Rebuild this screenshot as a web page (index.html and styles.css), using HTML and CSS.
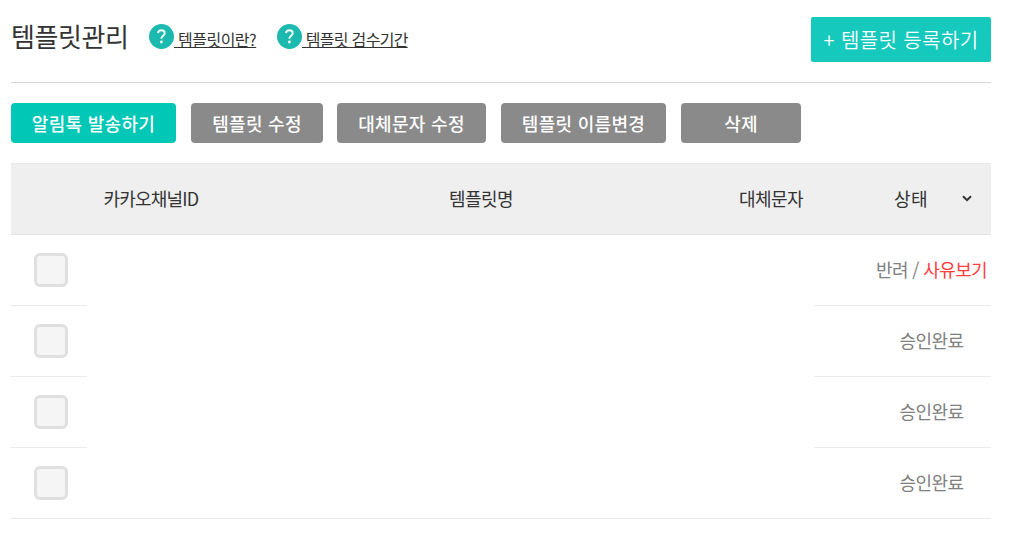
FILE: index.html
```
<!DOCTYPE html>
<html lang="ko">
<head>
    <meta charset="UTF-8">
    <meta name="viewport" content="width=device-width, initial-scale=1.0">
    <title>템플릿관리</title>
    <link rel="stylesheet" href="styles.css">
</head>
<body>
    <header class="page-header">
        <h1>템플릿관리</h1>
        <a href="#" class="help help-what">
            <svg class="help-icon" viewBox="0 0 25 25"><circle cx="12.5" cy="12.5" r="12.5" fill="#1cb9af"/><path d="M9 9.2C9.200 7.200 10.600 6.200 12.400 6.200c2 0 3.300 1.100 3.300 2.900 0 2.700-3.300 2.600-3.300 5.600" fill="none" stroke="#f2fbfa" stroke-width="2"/><circle cx="12.400" cy="18" r="1.400" fill="#f2fbfa"/></svg>
            <span>&nbsp;템플릿이란?</span>
        </a>
        <a href="#" class="help help-period">
            <svg class="help-icon" viewBox="0 0 25 25"><circle cx="12.5" cy="12.5" r="12.5" fill="#1cb9af"/><path d="M9 9.2C9.200 7.200 10.600 6.200 12.400 6.200c2 0 3.300 1.100 3.300 2.900 0 2.700-3.300 2.600-3.300 5.600" fill="none" stroke="#f2fbfa" stroke-width="2"/><circle cx="12.400" cy="18" r="1.400" fill="#f2fbfa"/></svg>
            <span>&nbsp;템플릿 검수기간</span>
        </a>
        <button class="btn-register">+ 템플릿 등록하기</button>
    </header>
    <div class="actions">
        <button class="btn btn-send">알림톡 발송하기</button>
        <button class="btn btn-edit">템플릿 수정</button>
        <button class="btn btn-sub">대체문자 수정</button>
        <button class="btn btn-rename">템플릿 이름변경</button>
        <button class="btn btn-delete">삭제</button>
    </div>
    <table class="template-list">
        <colgroup>
            <col class="col-check">
            <col class="col-id">
            <col class="col-name">
            <col class="col-sub">
            <col class="col-status">
        </colgroup>
        <thead>
            <tr>
                <th></th>
                <th class="th-id">카카오채널ID</th>
                <th class="th-name">템플릿명</th>
                <th>대체문자</th>
                <th>
                    <div class="filter">
                        <span>상태</span>
                        <svg class="arrow" viewBox="0 0 10 7"><path d="M1 1.2l4 4 4-4" fill="none" stroke="#333" stroke-width="2"/></svg>
                    </div>
                </th>
            </tr>
        </thead>
        <tbody>
            <tr>
                <td><input type="checkbox" class="check"></td>
                <td class="blank" colspan="3"></td>
                <td class="status">반려 / <a href="#" class="reason">사유보기</a></td>
            </tr>
            <tr>
                <td><input type="checkbox" class="check"></td>
                <td class="blank" colspan="3"></td>
                <td class="status">승인완료</td>
            </tr>
            <tr>
                <td><input type="checkbox" class="check"></td>
                <td class="blank" colspan="3"></td>
                <td class="status">승인완료</td>
            </tr>
            <tr>
                <td><input type="checkbox" class="check"></td>
                <td colspan="3"></td>
                <td class="status">승인완료</td>
            </tr>
        </tbody>
    </table>
</body>
</html>
```
FILE: styles.css
```
* {
    box-sizing: border-box;
}
body {
    margin: 0;
    padding: 0 24px 0 11px;
    background-color: #fff;
    color: #333;
    font-family: "Noto Sans CJK KR", sans-serif;
}
button {
    border: none;
    padding: 0;
    color: #fff;
    font-family: inherit;
    cursor: pointer;
}
.page-header {
    display: flex;
    align-items: flex-start;
    height: 83px;
    border-bottom: 1px solid #d6d6d6;
}
h1 {
    width: 138px;
    margin: 16px 0 0;
    font-size: 26px;
    font-weight: 400;
    line-height: 40px;
    letter-spacing: -0.4px;
    white-space: nowrap;
}
.help {
    display: flex;
    width: 128px;
    margin-top: 24px;
    color: #333;
    font-size: 16px;
    line-height: 30px;
    letter-spacing: -0.5px;
    text-decoration: none;
    white-space: nowrap;
}
.help span {
    text-decoration: underline;
}
.help-icon {
    flex: none;
    width: 25px;
    height: 25px;
}
.help-period {
    width: auto;
    letter-spacing: -0.7px;
}
.btn-register {
    width: 180px;
    height: 45px;
    margin: 17px 0 0 auto;
    border-radius: 2px;
    background-color: #15c9bd;
    font-size: 20px;
    font-weight: 350;
    letter-spacing: 0.4px;
}
.actions {
    display: flex;
    padding: 20px 0;
}
.btn {
    height: 40px;
    border-radius: 4px;
    background-color: #8a8a8a;
    font-size: 18px;
    font-weight: 500;
    letter-spacing: 0.3px;
}
.btn-send {
    width: 165px;
    margin-right: 15px;
    background-color: #00c7b6;
}
.btn-edit {
    width: 132px;
    margin-right: 14px;
}
.btn-sub {
    width: 149px;
    margin-right: 15px;
}
.btn-rename {
    width: 165px;
    margin-right: 15px;
}
.btn-delete {
    width: 120px;
}
.template-list {
    width: 980px;
    table-layout: fixed;
    border-collapse: separate;
    border-spacing: 0;
    font-size: 18px;
    letter-spacing: -0.6px;
}
.col-check {
    width: 76px;
}
.col-id {
    width: 147px;
}
.col-name {
    width: 494px;
}
.col-sub {
    width: 86px;
}
th {
    height: 72px;
    padding: 0 0 2px;
    border-top: 1px solid #e9e9e9;
    border-bottom: 1px solid #e3e3e3;
    background-color: #efefef;
    font-weight: 400;
}
.th-id {
    padding-right: 19px;
    letter-spacing: -0.8px;
}
td {
    height: 71px;
    padding: 0;
    border-bottom: 1px solid #ebebeb;
}
.blank {
    border-bottom-color: transparent;
}
.filter {
    display: flex;
    align-items: center;
    justify-content: space-between;
    padding: 0 19px 0 80px;
    letter-spacing: 0.4px;
}
.arrow {
    width: 10px;
    height: 7px;
}
.check {
    display: block;
    appearance: none;
    width: 34px;
    height: 34px;
    margin: 0 0 0 23px;
    border: 3px solid #e0e0e0;
    border-radius: 6px;
    background-color: #f5f5f5;
}
.status {
    padding: 0 0 2px 58px;
    color: #808080;
    font-weight: 400;
    text-align: center;
    white-space: nowrap;
}
.reason {
    color: #ff4040;
    text-decoration: none;
}
```
